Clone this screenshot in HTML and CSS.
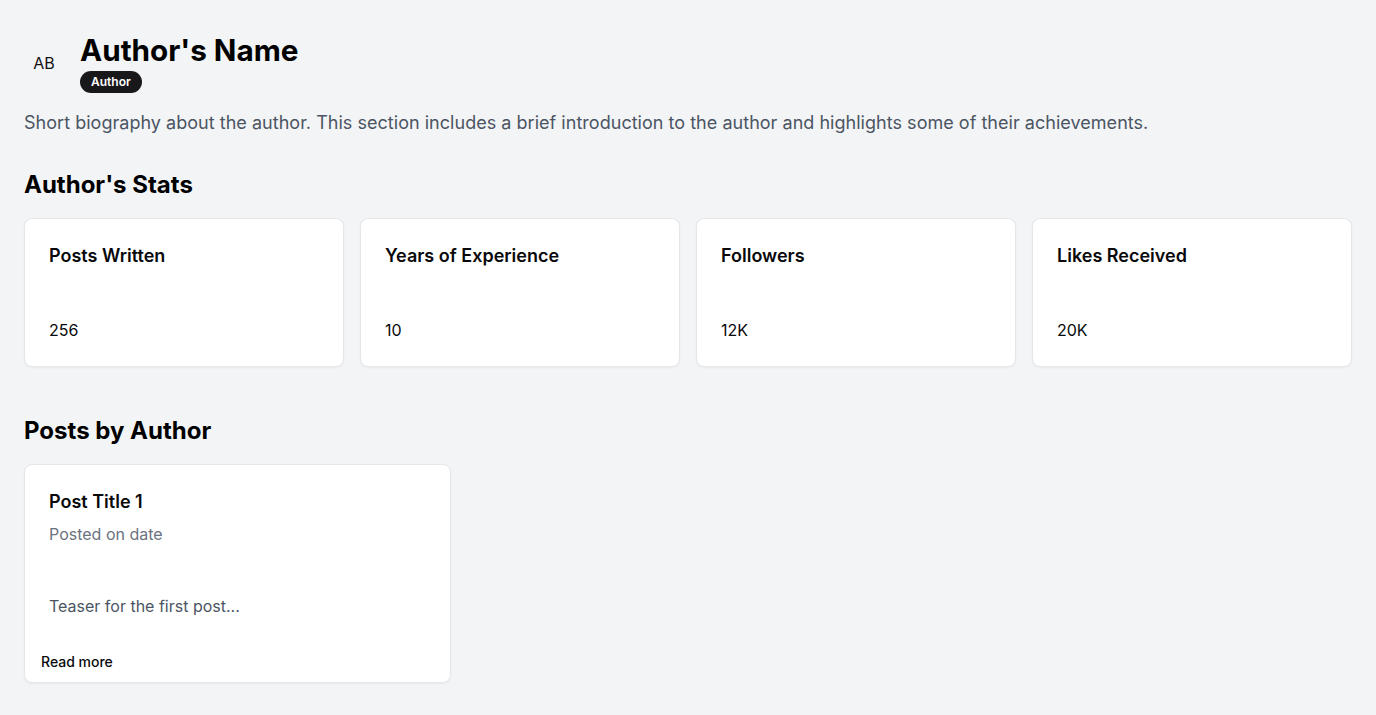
FILE: index.html
```
<!DOCTYPE html>
<html lang="en">
<head>
<meta charset="utf-8">
<title>Author Profile</title>
<link rel="stylesheet" href="styles.css">
</head>
<body>
<main class="page">
  <header class="profile">
    <div class="avatar">AB</div>
    <div class="identity">
      <h1 class="name">Author's Name</h1>
      <span class="badge">Author</span>
    </div>
  </header>
  <p class="bio">Short biography about the author. This section includes a brief introduction to the author and highlights some of their achievements.</p>

  <section class="section stats-section">
    <h2 class="section-title">Author's Stats</h2>
    <div class="stats-grid">
      <div class="card stat-card">
        <h3 class="card-title">Posts Written</h3>
        <p class="stat-value">256</p>
      </div>
      <div class="card stat-card">
        <h3 class="card-title">Years of Experience</h3>
        <p class="stat-value">10</p>
      </div>
      <div class="card stat-card">
        <h3 class="card-title">Followers</h3>
        <p class="stat-value">12K</p>
      </div>
      <div class="card stat-card">
        <h3 class="card-title">Likes Received</h3>
        <p class="stat-value">20K</p>
      </div>
    </div>
  </section>

  <section class="section posts-section">
    <h2 class="section-title">Posts by Author</h2>
    <div class="posts-grid">
      <article class="card post-card">
        <div class="post-header">
          <h3 class="card-title">Post Title 1</h3>
          <p class="post-date">Posted on date</p>
        </div>
        <p class="post-teaser">Teaser for the first post...</p>
        <div class="post-footer">
          <a class="read-more" href="#">Read more</a>
        </div>
      </article>
    </div>
  </section>
</main>
</body>
</html>
```
FILE: styles.css
```
* { box-sizing: border-box; }
html, body { margin: 0; padding: 0; }
body {
  background: #f3f4f6;
  font-family: Inter, "Noto Sans", sans-serif;
  color: #030712;
}
.page {
  padding: 32px 24px 24px;
}
.profile {
  display: flex;
  align-items: center;
  gap: 16px;
}
.avatar {
  width: 40px;
  height: 40px;
  border-radius: 50%;
  display: flex;
  align-items: center;
  justify-content: center;
  font-size: 16px;
  color: #111;
}
.identity {
  display: flex;
  flex-direction: column;
  align-items: flex-start;
}
.name {
  margin: 0;
  font-size: 29.7px;
  line-height: 36px;
  font-weight: 700;
  color: #000;
}
.badge {
  display: inline-block;
  margin-top: 3px;
  background: #18181b;
  color: #fff;
  font-size: 12px;
  font-weight: 600;
  line-height: 16px;
  padding: 3px 11px;
  border-radius: 999px;
}
.bio {
  margin: 16px 0 0;
  font-size: 18px;
  line-height: 28px;
  letter-spacing: 0.0015em;
  color: #4b5563;
}
.section-title {
  margin: 0;
  font-size: 24px;
  line-height: 32px;
  font-weight: 700;
  color: #000;
}
.stats-section { margin-top: 32px; }
.stats-grid {
  margin-top: 17px;
  display: grid;
  grid-template-columns: repeat(4, 1fr);
  gap: 16px;
}
.card {
  background: #fff;
  border: 1px solid #e5e7eb;
  border-radius: 8px;
  box-shadow: 0 1px 2px rgba(0,0,0,0.05);
}
.stat-card {
  padding: 25px 24px 24px;
  display: flex;
  flex-direction: column;
}
.card-title {
  margin: 0;
  font-size: 18px;
  line-height: 24px;
  font-weight: 600;
  color: #09090b;
}
.stat-value {
  margin: 50px 0 0;
  font-size: 16px;
  line-height: 24px;
  color: #09090b;
}
.posts-section { margin-top: 48px; }
.posts-grid {
  margin-top: 17px;
  display: grid;
  grid-template-columns: repeat(3, 1fr);
  gap: 24px;
}
.post-card {
  display: flex;
  flex-direction: column;
}
.post-header {
  padding: 25px 24px 0;
  display: flex;
  flex-direction: column;
  gap: 8px;
}
.post-date {
  margin: 0;
  font-size: 16px;
  line-height: 24px;
  color: #6b7280;
}
.post-teaser {
  margin: 0;
  padding: 48px 24px 24px;
  font-size: 16px;
  line-height: 24px;
  color: #4b5563;
}
.post-footer {
  display: flex;
}
.read-more {
  display: inline-flex;
  align-items: center;
  height: 40px;
  padding: 0 16px 2px;
  font-size: 14px;
  font-weight: 500;
  color: #09090b;
  text-decoration: none;
}
```
